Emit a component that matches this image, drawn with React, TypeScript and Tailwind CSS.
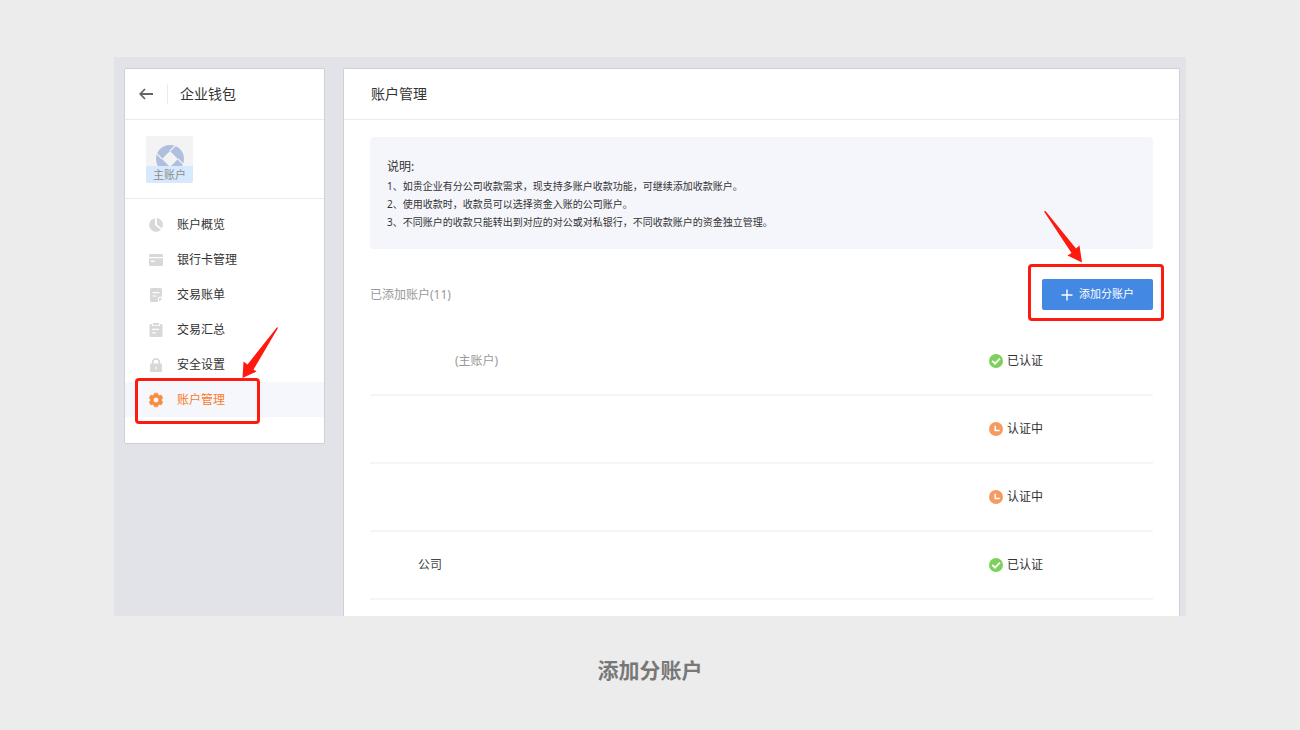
import type { ReactNode } from 'react';

type NavItem = { label: string; icon: ReactNode; active?: boolean };

// Sidebar entries, icons share a 14x14 grid
const navItems: NavItem[] = [
  {
    label: '账户概览',
    icon: (
      <>
        <path d="M6 0.2 A6.8 6.8 0 1 0 11.8 11.7 L6.6 7.6 Q6 7.1 6 6.3 Z" />
        <path d="M7.8 0.1 A6.6 6.6 0 0 1 12.8 10.3 L8.3 6.7 Q7.8 6.3 7.8 5.7 Z" />
      </>
    ),
  },
  {
    label: '银行卡管理',
    icon: (
      <path
        fillRule="evenodd"
        d="M1 1 H13 Q14 1 14 2 V4 H0 V2 Q0 1 1 1 Z M0 5.2 H14 V12 Q14 13 13 13 H1 Q0 13 0 12 Z M2 7.5 V8.9 H5.5 V7.5 Z"
      />
    ),
  },
  {
    label: '交易账单',
    icon: (
      <>
        <path
          fillRule="evenodd"
          d="M2.5 0 H11.5 Q13 0 13 1.5 V8.8 H10.5 Q9 8.8 9 10.3 V14 H2.5 Q1 14 1 12.5 V1.5 Q1 0 2.5 0 Z M3.5 4 V5.2 H10.5 V4 Z M3.5 7.4 V8.6 H7.5 V7.4 Z"
        />
        <path d="M10 10 H13 Q12.6 12.6 10 13.6 Z" />
      </>
    ),
  },
  {
    label: '交易汇总',
    icon: (
      <path
        fillRule="evenodd"
        d="M2 1 H3 V3 H11 V1 H12 Q13.5 1 13.5 2.5 V12.5 Q13.5 14 12 14 H2 Q0.5 14 0.5 12.5 V2.5 Q0.5 1 2 1 Z M4 0 H10 V2.2 H4 Z M3 5.7 V6.9 H10 V5.7 Z M3 9.2 V10.4 H7 V9.2 Z"
      />
    ),
  },
  {
    label: '安全设置',
    icon: (
      <path
        fillRule="evenodd"
        d="M2.8 5.5 V4.2 A4.2 4.2 0 0 1 11.2 4.2 V5.5 H11.8 Q13 5.5 13 6.7 V12.8 Q13 14 11.8 14 H2.2 Q1 14 1 12.8 V6.7 Q1 5.5 2.2 5.5 Z M4.6 5.5 H9.4 V4.2 A2.4 2.4 0 0 0 4.6 4.2 Z M6.4 8.8 V11.3 H7.6 V8.8 Z"
      />
    ),
  },
  {
    label: '账户管理',
    active: true,
    icon: (
      <path
        fillRule="evenodd"
        strokeWidth="0.6"
        strokeLinejoin="round"
        d="M5.4 0.2 H8.6 L9.1 1.9 L10.4 2.6 L12.2 2.1 L13.8 4.9 L12.6 6.2 V7.8 L13.8 9.1 L12.2 11.9 L10.4 11.4 L9.1 12.1 L8.6 13.8 H5.4 L4.9 12.1 L3.6 11.4 L1.8 11.9 L0.2 9.1 L1.4 7.8 V6.2 L0.2 4.9 L1.8 2.1 L3.6 2.6 L4.9 1.9 Z M7 4.3 A2.7 2.7 0 1 0 7 9.7 A2.7 2.7 0 1 0 7 4.3 Z"
      />
    ),
  },
];

const notes = [
  '1、如贵企业有分公司收款需求，现支持多账户收款功能，可继续添加收款账户。',
  '2、使用收款时，收款员可以选择资金入账的公司账户。',
  '3、不同账户的收款只能转出到对应的对公或对私银行，不同收款账户的资金独立管理。',
];

const accounts = [
  { id: 1, name: '(主账户)', nameClass: 'pl-[85px] text-[#999999]', verified: true },
  { id: 2, name: '', nameClass: '', verified: false },
  { id: 3, name: '', nameClass: '', verified: false },
  { id: 4, name: '公司', nameClass: 'pl-12 text-[#444444]', verified: true },
];

function StatusIcon({ verified }: { verified: boolean }) {
  return (
    <svg viewBox="0 0 14 14" className="size-3.5 shrink-0" fill="none" stroke="#ffffff" aria-hidden="true">
      <circle cx="7" cy="7" r="7" stroke="none" fill={verified ? '#7bd15b' : '#f59a60'} />
      {verified ? (
        <path d="M3.2 6.8 L6 9.6 L10.9 4.6" strokeWidth="1.9" />
      ) : (
        <path d="M6.2 3.8 V8.6 H10.8" strokeWidth="1.5" />
      )}
    </svg>
  );
}

function Sidebar() {
  return (
    <aside className="w-[201px] shrink-0 rounded-xs border border-[#cfd1d6] bg-white pb-[26px]">
      <header className="flex h-[51px] items-center border-b border-[#ebebeb] pl-3.5">
        <button type="button" aria-label="返回">
          <svg viewBox="0 0 14 12" className="h-3 w-3.5" fill="none" stroke="#666666" strokeWidth="1.8" aria-hidden="true">
            <path d="M14 6 H1.5 M6 1 L1.2 6 L6 11" />
          </svg>
        </button>
        <h2 className="ml-3.5 flex h-5 items-center border-l border-[#ebebeb] pl-3 text-sm text-[#333333]">企业钱包</h2>
      </header>

      <div className="border-b border-[#ebebeb] px-[21px] pt-4 pb-[15px]">
        <div className="flex size-[47px] flex-col overflow-hidden rounded-xs bg-[#f3f3f3]">
          <svg viewBox="0 0 47 30" className="h-[30px] w-full" aria-hidden="true">
            <circle cx="24" cy="23" r="14" fill="#b0bfdf" />
            <path d="M24 15 L32 23 L24 31 L16 23 Z" fill="#f3f3f3" />
            <path d="M24 15 L30 9 M32 23 L38 29 M16 23 L10 17" stroke="#f3f3f3" strokeWidth="1.2" />
          </svg>
          <span className="bg-[#d6e9fe] text-center text-[11px] leading-[17px] text-[#8c8c8c]">主账户</span>
        </div>
      </div>

      <nav className="pt-2">
        <ul>
          {navItems.map((item) => (
            <li key={item.label} className={item.active ? 'relative bg-[#f6f7fc]' : ''}>
              <a
                href="#"
                className={`flex h-[35px] items-center gap-3.5 pl-6 text-xs ${
                  item.active ? 'text-[#f97a2b]' : 'text-[#333333]'
                }`}
              >
                <svg
                  viewBox="0 0 14 14"
                  className={`size-3.5 overflow-visible ${
                    item.active ? 'fill-[#f78d3f] stroke-[#f78d3f]' : 'fill-[#d8d8d8]'
                  }`}
                  aria-hidden="true"
                >
                  {item.icon}
                </svg>
                {item.label}
              </a>
              {item.active && (
                <>
                  <span className="pointer-events-none absolute -top-1 left-2.5 h-[46px] w-[125px] rounded-sm border-3 border-[#ff1a10]" />
                  <svg viewBox="0 0 36 51" className="pointer-events-none absolute -top-[55px] left-[117px] h-[51px] w-9" aria-hidden="true">
                    <path d="M35.2 0 L36 1 L11.5 42.5 L14.5 44.5 L0.5 51 L1.5 34.5 L5.5 37.5 Z" fill="#ff1a10" />
                  </svg>
                </>
              )}
            </li>
          ))}
        </ul>
      </nav>
    </aside>
  );
}

function AccountPanel() {
  return (
    <main className="min-w-0 flex-1 rounded-t-xs border border-b-0 border-[#cfd1d6] bg-white pb-4">
      <header className="flex h-[51px] items-center border-b border-[#ebebeb] pl-[27px]">
        <h1 className="text-sm text-[#333333]">账户管理</h1>
      </header>

      <div className="px-[26px] pt-[17px]">
        <section className="rounded-sm bg-[#f5f6fb] px-[17px] pt-5 pb-[18px] text-[#333333]">
          <h3 className="text-xs leading-5">说明:</h3>
          {notes.map((note) => (
            <p key={note} className="text-[10px] leading-[18px]">{note}</p>
          ))}
        </section>

        <div className="mt-[30px] flex items-center justify-between">
          <span className="text-xs text-[#999999]">已添加账户(11)</span>
          <div className="relative">
            <button type="button" className="flex h-[31px] w-[111px] items-center justify-center gap-1.5 rounded-xs bg-[#4388e2] text-[11px] text-white">
              <svg viewBox="0 0 12 12" className="size-3" stroke="currentColor" strokeWidth="1.4" aria-hidden="true">
                <path d="M6 0.5 V11.5 M0.5 6 H11.5" />
              </svg>
              添加分账户
            </button>
            <span className="pointer-events-none absolute -top-[15px] -right-[11px] h-[57px] w-[136px] rounded-sm border-3 border-[#ff1a10]" />
            <svg viewBox="0 0 39 52" className="pointer-events-none absolute -top-[68px] left-0.5 h-[52px] w-[39px]" aria-hidden="true">
              <path d="M0 0.5 L1.5 0 L32 37.5 L35.5 34.5 L38 51.5 L23.5 44.5 L27.5 42 Z" fill="#ff1a10" />
            </svg>
          </div>
        </div>

        <table className="mt-[17px] w-full text-left text-xs">
          <tbody>
            {accounts.map((account) => (
              <tr key={account.id} className="h-[68px] border-b-2 border-[#f5f5f5]">
                <td className={account.nameClass}>{account.name}</td>
                <td className="w-[164px] text-[#333333]">
                  <span className="flex items-center gap-1">
                    <StatusIcon verified={account.verified} />
                    {account.verified ? '已认证' : '认证中'}
                  </span>
                </td>
              </tr>
            ))}
          </tbody>
        </table>
      </div>
    </main>
  );
}

export default function App() {
  return (
    <div className="min-h-screen bg-[#ececec] px-[114px] pt-[57px] font-['Noto_Sans','Noto_Sans_CJK_SC',sans-serif]">
      <div className="flex items-start gap-[18px] bg-[#e2e3e9] pt-[11px] pr-1.5 pl-2.5">
        <Sidebar />
        <AccountPanel />
      </div>
      <p className="py-[39px] text-center text-[21px] leading-[30px] font-bold text-[#787878]">添加分账户</p>
    </div>
  );
}
